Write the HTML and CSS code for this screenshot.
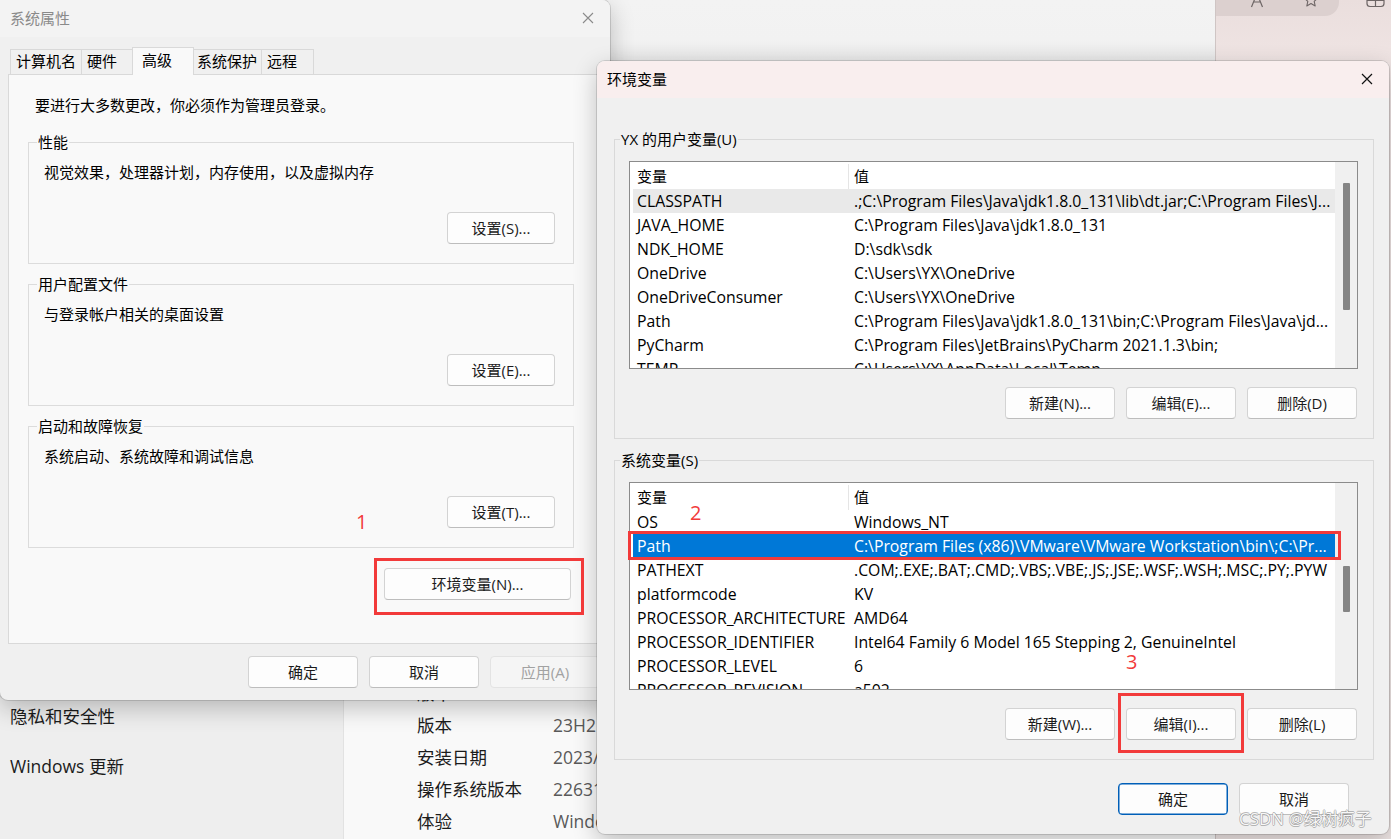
FILE: index.html
```html
<!DOCTYPE html>
<html lang="zh-CN">
<head>
<meta charset="utf-8">
<title>环境变量</title>
<link rel="stylesheet" href="styles.css">
</head>
<body>
<div class="desktop">

  <!-- Settings window in background -->
  <div class="settings">
    <nav class="settings-nav">
      <div class="nav-item">隐私和安全性</div>
      <div class="nav-item">Windows 更新</div>
    </nav>
    <section class="settings-content">
      <div class="spec-row"><span class="spec-k">版本</span><span class="spec-v">Windows 11 家庭中文版</span></div>
      <div class="spec-row"><span class="spec-k">版本</span><span class="spec-v">23H2</span></div>
      <div class="spec-row"><span class="spec-k">安装日期</span><span class="spec-v">2023/5/20</span></div>
      <div class="spec-row"><span class="spec-k">操作系统版本</span><span class="spec-v">22631.3007</span></div>
      <div class="spec-row"><span class="spec-k">体验</span><span class="spec-v">Windows Feature Experience Pack</span></div>
    </section>
  </div>

  <!-- Browser window edge -->
  <div class="browser">
    <div class="browser-top">
      <div class="browser-bar">
        <svg class="bicon bicon-a" width="14" height="16" viewBox="0 0 14 16"><path d="M1.5 15L7 1.5 12.5 15M3.6 10h6.8" fill="none" stroke="#6d6565" stroke-width="1.2"/></svg>
        <svg class="bicon bicon-star" width="16" height="16" viewBox="0 0 16 16"><path d="M8 1.2l2 4.4 4.8.5-3.6 3.2 1 4.7L8 11.6 3.8 14l1-4.7L1.2 6.1l4.8-.5z" fill="none" stroke="#6d6565" stroke-width="1.1" stroke-linejoin="round"/></svg>
      </div>
      <svg class="bicon bicon-col" width="19" height="16" viewBox="0 0 19 16"><path d="M1 2v9.5a3 3 0 0 0 3 3h11a3 3 0 0 0 3-3V2M9.5 2v12.5M1 8.5h17" fill="none" stroke="#6d6565" stroke-width="1.2"/></svg>
    </div>
  </div>

  <!-- 系统属性 dialog -->
  <div class="dlg dlg-sys">
    <div class="dlg-title dlg-title-inactive">
      <span>系统属性</span>
      <svg class="xicon" width="12" height="12" viewBox="0 0 12 12"><path d="M1 1L11 11M11 1L1 11" stroke="currentColor" stroke-width="1.1"/></svg>
    </div>
    <div class="sys-body">
      <div class="tabs">
        <div class="tab tab-w1">计算机名</div>
        <div class="tab tab-w2">硬件</div>
        <div class="tab tab-w3 tab-active">高级</div>
        <div class="tab tab-w4">系统保护</div>
        <div class="tab tab-w5">远程</div>
      </div>
      <div class="panel">
        <p class="intro">要进行大多数更改，你必须作为管理员登录。</p>
        <fieldset class="grp grp-first">
          <legend>性能</legend>
          <p class="grp-text">视觉效果，处理器计划，内存使用，以及虚拟内存</p>
          <div class="grp-actions"><button class="btn btn-set">设置(S)...</button></div>
        </fieldset>
        <fieldset class="grp">
          <legend>用户配置文件</legend>
          <p class="grp-text">与登录帐户相关的桌面设置</p>
          <div class="grp-actions"><button class="btn btn-set">设置(E)...</button></div>
        </fieldset>
        <fieldset class="grp">
          <legend>启动和故障恢复</legend>
          <p class="grp-text">系统启动、系统故障和调试信息</p>
          <div class="grp-actions"><button class="btn btn-set">设置(T)...</button></div>
        </fieldset>
        <button class="btn btn-env">环境变量(N)...</button>
      </div>
    </div>
    <div class="dlg-footer dlg-footer-sys">
      <button class="btn">确定</button>
      <button class="btn">取消</button>
      <button class="btn btn-disabled">应用(A)</button>
    </div>
  </div>

  <!-- 环境变量 dialog -->
  <div class="dlg dlg-env">
    <div class="dlg-title dlg-title-active">
      <span>环境变量</span>
      <svg class="xicon" width="12" height="12" viewBox="0 0 12 12"><path d="M1 1L11 11M11 1L1 11" stroke="currentColor" stroke-width="1.2"/></svg>
    </div>
    <div class="env-body">
      <fieldset class="egrp">
        <legend>YX 的用户变量(U)</legend>
        <div class="lv">
          <div class="lv-body">
            <div class="lv-head"><span>变量</span><span>值</span></div>
            <div class="lv-row lv-sel-gray"><span>CLASSPATH</span><span>.;C:\Program Files\Java\jdk1.8.0_131\lib\dt.jar;C:\Program Files\J...</span></div>
            <div class="lv-row"><span>JAVA_HOME</span><span>C:\Program Files\Java\jdk1.8.0_131</span></div>
            <div class="lv-row"><span>NDK_HOME</span><span>D:\sdk\sdk</span></div>
            <div class="lv-row"><span>OneDrive</span><span>C:\Users\YX\OneDrive</span></div>
            <div class="lv-row"><span>OneDriveConsumer</span><span>C:\Users\YX\OneDrive</span></div>
            <div class="lv-row"><span>Path</span><span>C:\Program Files\Java\jdk1.8.0_131\bin;C:\Program Files\Java\jd...</span></div>
            <div class="lv-row"><span>PyCharm</span><span>C:\Program Files\JetBrains\PyCharm 2021.1.3\bin;</span></div>
            <div class="lv-row"><span>TEMP</span><span>C:\Users\YX\AppData\Local\Temp</span></div>
          </div>
          <div class="lv-scroll"><div class="thumb thumb-user"></div></div>
        </div>
        <div class="row-actions">
          <button class="btn">新建(N)...</button>
          <button class="btn">编辑(E)...</button>
          <button class="btn">删除(D)</button>
        </div>
      </fieldset>
      <fieldset class="egrp egrp-sys">
        <legend>系统变量(S)</legend>
        <div class="lv">
          <div class="lv-body">
            <div class="lv-head"><span>变量</span><span>值</span></div>
            <div class="lv-row"><span>OS</span><span>Windows_NT</span></div>
            <div class="lv-row lv-sel-blue"><span>Path</span><span>C:\Program Files (x86)\VMware\VMware Workstation\bin\;C:\Pr...</span></div>
            <div class="lv-row"><span>PATHEXT</span><span>.COM;.EXE;.BAT;.CMD;.VBS;.VBE;.JS;.JSE;.WSF;.WSH;.MSC;.PY;.PYW</span></div>
            <div class="lv-row"><span>platformcode</span><span>KV</span></div>
            <div class="lv-row"><span>PROCESSOR_ARCHITECTURE</span><span>AMD64</span></div>
            <div class="lv-row"><span>PROCESSOR_IDENTIFIER</span><span>Intel64 Family 6 Model 165 Stepping 2, GenuineIntel</span></div>
            <div class="lv-row"><span>PROCESSOR_LEVEL</span><span>6</span></div>
            <div class="lv-row"><span>PROCESSOR_REVISION</span><span>a502</span></div>
          </div>
          <div class="lv-scroll"><div class="thumb thumb-sys"></div></div>
        </div>
        <div class="row-actions">
          <button class="btn">新建(W)...</button>
          <button class="btn">编辑(I)...</button>
          <button class="btn">删除(L)</button>
        </div>
      </fieldset>
    </div>
    <div class="dlg-footer dlg-footer-env">
      <button class="btn btn-default">确定</button>
      <button class="btn">取消</button>
    </div>
  </div>

  <!-- annotations -->
  <div class="mark mark-env"></div>
  <div class="mark mark-path"></div>
  <div class="mark mark-edit"></div>
  <span class="num num-1">1</span>
  <span class="num num-2">2</span>
  <span class="num num-3">3</span>
  <span class="watermark">CSDN @绿树疯子</span>
</div>
</body>
</html>
```
FILE: styles.css
```css
* { box-sizing: border-box; margin: 0; padding: 0; }
html, body { width: 1391px; height: 839px; overflow: hidden; }
body {
  font-family: "Open Sans", "Noto Sans CJK SC", sans-serif;
  font-size: 15px;
  color: #000;
  background: #f3f3f3;
}
.desktop { position: relative; width: 1391px; height: 839px; overflow: hidden; }

/* ---------- settings window ---------- */
.settings {
  position: absolute; left: 0; top: 0; width: 1215px; height: 839px;
  display: grid; grid-template-columns: 343px 1fr;
  background: linear-gradient(#f3f3f3 0, #f2f2f2 40px, #e6e6e6 62px, #eeeeee 120px);
}
.settings-nav { padding-top: 691px; }
.nav-item {
  height: 50px; line-height: 50px; padding-left: 10px;
  font-size: 17.5px; color: #1b1b1b; white-space: nowrap;
}
.settings-content {
  margin-top: 90px;
  background: #f9f9f9;
  border-left: 1px solid #e2e2e2;
  padding: 587px 0 0 73px;
}
.spec-row { display: flex; height: 32px; line-height: 32px; font-size: 17.5px; white-space: nowrap; }
.spec-k { width: 136px; color: #1b1b1b; }
.spec-v { color: #5a5a5a; }

/* ---------- browser ---------- */
.browser {
  position: absolute; left: 1215px; top: 0; right: 0; height: 839px;
  border-left: 1px solid #cfc5c4;
  background: linear-gradient(#eadedd, #efe4e3 60px, #f1e8e7);
}
.browser-top { display: flex; align-items: flex-start; }
.browser-bar {
  width: 123px; height: 16px; background: #dcd0cf;
  border-bottom-right-radius: 14px;
  display: flex; align-items: flex-start;
}
.bicon { display: block; margin-top: -8px; }
.bicon-a { margin-left: 34px; }
.bicon-star { margin-left: 39px; }
.bicon-col { margin-left: 27px; }

/* ---------- dialogs ---------- */
.dlg {
  position: absolute;
  display: flex; flex-direction: column;
  border-radius: 8px;
  overflow: hidden;
  box-shadow: 0 0 0 1px rgba(0,0,0,.13), 0 8px 24px rgba(0,0,0,.24);
}
.dlg-sys { left: 0; top: 0; width: 610px; height: 700px; background: #f0f0f0; border-top-left-radius: 0; }
.dlg-env { left: 597px; top: 61px; width: 792px; height: 773px; background: #f0f0f0; }

.dlg-title {
  height: 37px; flex: none;
  display: flex; align-items: center; justify-content: space-between;
  padding: 0 16px 2px 10px;
  line-height: 20px;
}
.dlg-title-inactive { background: #f3f3f3; color: #8a8a8a; }
.dlg-title-active { background: #f9eeee; color: #000; }
.xicon { display: block; }
.dlg-title-inactive .xicon { color: #8a8a8a; }
.dlg-title-active .xicon { color: #111; }

.btn {
  font-family: inherit; font-size: 15px; color: #1b1b1b;
  width: 110px; height: 32px; line-height: 30px;
  background: #fdfdfd;
  border: 1px solid #d3d3d3; border-bottom-color: #bdbdbd;
  border-radius: 4px;
  text-align: center;
}
.btn-disabled { color: #a2a2a2; background: #f5f5f5; border-color: #e3e3e3; }
.btn-default { border: 1px solid #005fb8; box-shadow: inset 0 0 0 0.5px #005fb8; }

/* 系统属性 body */
.sys-body { flex: 1; display: flex; flex-direction: column; padding: 0 8px; }
.tabs {
  display: flex; align-items: flex-end;
  height: 27px; margin-top: 10px; padding-left: 2px;
}
.tab {
  height: 25px; line-height: 23px;
  border: 1px solid #d9d9d9; border-bottom: none;
  background: #f0f0f0;
  padding-left: 5px;
  margin-left: -1px;
  white-space: nowrap;
}
.tab-w1 { width: 72px; margin-left: 0; }
.tab-w2 { width: 54px; }
.tab-w3 { width: 58px; }
.tab-w4 { width: 71px; }
.tab-w5 { width: 53px; }
.tab-active {
  position: relative; z-index: 1;
  height: 28px; line-height: 24px;
  width: 62px; margin: 0 -2px -1px -3px;
  padding-left: 9px;
  background: #f9f9f9;
}
.panel {
  flex: 1;
  display: flex; flex-direction: column;
  border: 1px solid #d9d9d9;
  background: #f9f9f9;
  padding: 20px 27px 0 19px;
}
.intro { line-height: 20px; padding-left: 7px; white-space: nowrap; }
.grp {
  border: 1px solid #dcdcdc;
  margin-top: 10px;
  padding: 0 18px 19px 15px;
  min-width: 0;
}
.grp-first { margin-top: 17px; }
.grp legend {
  line-height: 20px; padding: 0 1px; margin-left: -7px;
}
.grp-text { line-height: 20px; margin-top: 10px; white-space: nowrap; }
.grp-actions { display: flex; justify-content: flex-end; margin-top: 30px; }
.btn-set { width: 108px; }
.btn-env { width: 187px; align-self: flex-end; margin-top: 20px; margin-right: 3px; }

.dlg-footer { flex: none; display: flex; justify-content: flex-end; gap: 11px; }
.dlg-footer-sys { height: 56px; padding: 12px 10px 0 0; }
.dlg-footer-env { padding: 23px 40px 0 0; }

/* 环境变量 body */
.env-body { padding: 31px 15px 0 17px; }
.egrp {
  border: 1px solid #d9d9d9;
  padding: 0 15px 19px 14px;
  min-width: 0;
}
.egrp-sys { margin-top: 11px; }
.egrp legend { line-height: 20px; padding: 0 1px; margin-left: -9px; }

.lv {
  display: flex;
  height: 208px; margin-top: 12px;
  border: 1px solid #8b8b8b;
  background: #fff;
  font-size: 15.8px;
}
.lv-body { flex: 1; min-width: 0; overflow: hidden; padding-left: 3px; }
.lv-head, .lv-row {
  display: grid; grid-template-columns: 215px 1fr;
  white-space: nowrap;
}
.lv-head { height: 27px; line-height: 25px; padding-top: 2px; font-size: 15px; }
.lv-head span:first-child { padding-left: 4px; }
.lv-head span + span { border-left: 1px solid #e5e5e5; padding-left: 5px; }
.lv-row { height: 24px; line-height: 24px; }
.lv-row span { overflow: hidden; }
.lv-row span:first-child { padding-left: 4px; }
.lv-row span + span { padding-left: 6px; }
.lv-sel-gray { background: #e9e9e9; }
.lv-sel-blue { background: #0078d7; color: #fff; }
.lv-scroll { width: 22px; flex: none; background: #f0f0f0; padding-left: 8px; }
.thumb { width: 7px; background: #858585; border-radius: 1px; }
.thumb-user { margin-top: 21px; height: 127px; }
.thumb-sys { margin-top: 83px; height: 46px; }

.row-actions {
  display: flex; justify-content: flex-end; gap: 11px;
  margin-top: 18px; margin-right: 1px;
}

/* ---------- annotations ---------- */
.mark { position: absolute; border: 3px solid #f23a3a; }
.mark-env { left: 374px; top: 558px; width: 210px; height: 57px; }
.mark-path { left: 628px; top: 531px; width: 713px; height: 29px; }
.mark-edit { left: 1118px; top: 693px; width: 126px; height: 60px; }
.num {
  position: absolute;
  font-family: "Open Sans", sans-serif;
  font-size: 20px; line-height: 24px; color: #f23a3a;
}
.num-1 { left: 356px; top: 510px; }
.num-2 { left: 690px; top: 501px; }
.num-3 { left: 1126px; top: 650px; }
.watermark {
  position: absolute; left: 1239px; top: 807px;
  font-size: 17px; line-height: 24px; white-space: nowrap;
  color: rgba(255,255,255,.95);
  text-shadow: 0.7px 0 0 rgba(120,120,120,.5), -0.7px 0 0 rgba(120,120,120,.5), 0 0.7px 0 rgba(120,120,120,.5), 0 -0.7px 0 rgba(120,120,120,.5);
}
```
